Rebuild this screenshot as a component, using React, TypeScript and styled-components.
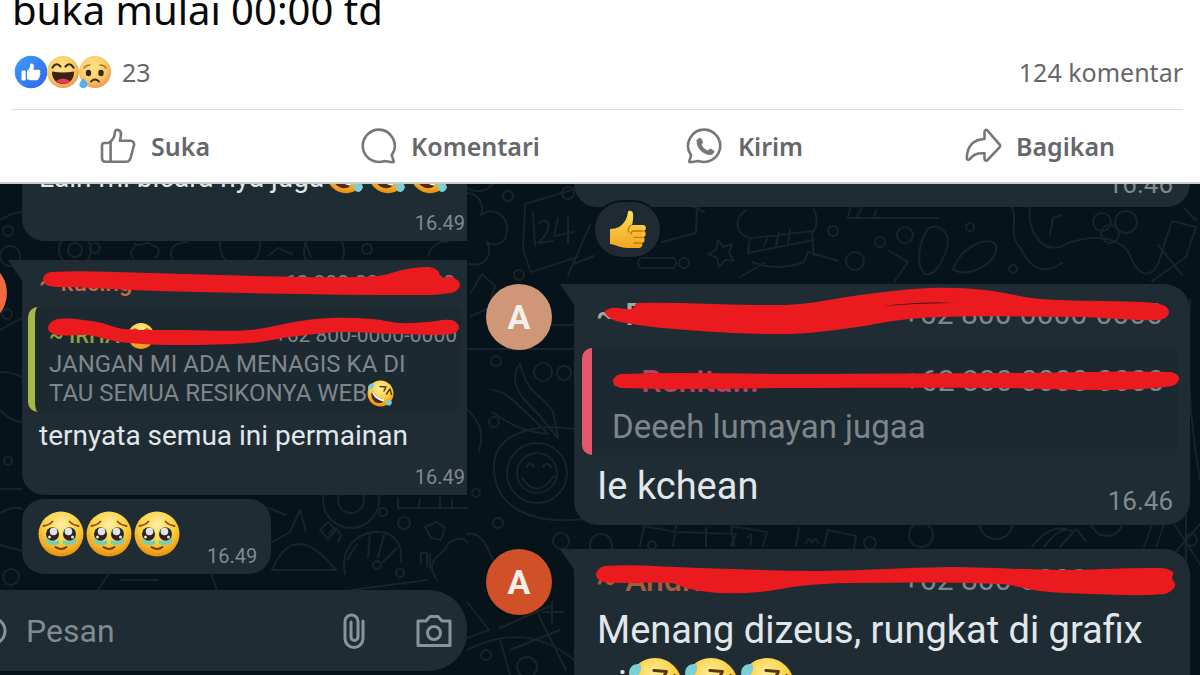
import React from "react";
import styled, { createGlobalStyle } from "styled-components";

const GlobalStyle = createGlobalStyle`
  * { box-sizing: border-box; }
  body { margin: 0; background: #07131a; }
`;

const uiFont = `"Noto Sans", "Open Sans", sans-serif`;
const chatFont = `Roboto, "Noto Sans", sans-serif`;

const Page = styled.main`
  display: flex;
  flex-direction: column;
  height: 100vh;
  overflow: hidden;
`;

/* ---------- Post ---------- */

const Post = styled.section`
  flex: none;
  padding: 0 17px 0 12px;
  background: #fff;
  border-bottom: 2px solid #c9cccd;
  font-family: ${uiFont};
  color: #65676b;
`;

const PostText = styled.p`
  display: flex;
  align-items: flex-end;
  height: 36px;
  margin: 0;
  overflow: hidden;
  font-size: 40px;
  line-height: 52px;
  color: #080809;
`;

const Summary = styled.div`
  display: flex;
  align-items: center;
  justify-content: space-between;
  height: 74px;
  padding: 0 0 2px 2px;
  border-bottom: 1px solid #dcdee1;
  font-size: 25px;
`;

const Reactions = styled.div`
  display: flex;
  align-items: center;
  gap: 10px;
`;

const Faces = styled.span`
  display: flex;
  svg + svg { margin-left: -1px; }
`;

const Actions = styled.div`
  display: grid;
  grid-template-columns: repeat(4, 1fr);
  height: 72px;
  margin: 0 -4px 0 -5px;
`;

const ActionButton = styled.button`
  display: flex;
  align-items: center;
  justify-content: center;
  gap: 14px;
  padding: 0;
  border: 0;
  background: none;
  font: 600 25px ${uiFont};
  color: #65676b;
`;

const LikeFace = () => (
  <svg width="34" height="34" viewBox="0 0 34 34">
    <defs>
      <linearGradient id="like" x1="0" y1="0" x2="1" y2="1">
        <stop offset="0" stopColor="#3fa0f5" />
        <stop offset="1" stopColor="#2f62ee" />
      </linearGradient>
    </defs>
    <circle cx="17" cy="17" r="16.3" fill="url(#like)" />
    <rect x="7.5" y="15.5" width="4.2" height="10" rx="1.2" fill="#fff" />
    <path d="M13 15.8c2-1.500 3-3.400 3.200-6.100.1-1.800 3.500-1.400 3.700 1.400.1 1.300-.3 2.600-.6 3.600h5.200c1.800 0 2.400 1.900 1.300 2.900 1.100.9.9 2.300-.3 2.900.6 1 .2 2.200-.9 2.600.2 1.300-.6 2.100-2 2.100h-4.800c-2.200 0-3.300-.5-4.800-1.300z" fill="#fff" />
  </svg>
);

const FaceGradient = ({ id }: { id: string }) => (
  <defs>
    <radialGradient id={id} cx=".42" cy=".35" r=".7">
      <stop offset="0" stopColor="#ffe58a" />
      <stop offset=".6" stopColor="#fbcb66" />
      <stop offset="1" stopColor="#ee8f4e" />
    </radialGradient>
  </defs>
);

const HahaFace = () => (
  <svg width="32" height="34" viewBox="0 0 32 34">
    <FaceGradient id="haha" />
    <circle cx="16" cy="17" r="16" fill="url(#haha)" />
    <path d="M5.500 12.500q4-6 8-1M26.500 12.500q-4-6-8-1" fill="none" stroke="#3a2a1c" strokeWidth="2.200" strokeLinecap="round" />
    <path d="M5 16.500q11 2 22 0c.5 7-4.500 12.500-11 12.500S4.500 23.500 5 16.500z" fill="#3c1f17" />
    <path d="M9 26q7-5 14 0-6.500 5.500-14 0z" fill="#ee3b57" />
  </svg>
);

const SadFace = () => (
  <svg width="34" height="34" viewBox="0 0 34 34">
    <FaceGradient id="sad" />
    <circle cx="17" cy="17" r="16" fill="url(#sad)" />
    <path d="M6 13q2-3 6-3M28 13q-2-3-6-3" fill="none" stroke="#b27a33" strokeWidth="1.500" strokeLinecap="round" />
    <ellipse cx="10.500" cy="18" rx="2.700" ry="3.200" fill="#2f2622" />
    <ellipse cx="23" cy="18" rx="2.700" ry="3.200" fill="#2f2622" />
    <path d="M13 26.500q4-4 8 0" fill="none" stroke="#3a2a1c" strokeWidth="1.800" strokeLinecap="round" />
    <path d="M5.500 23c2 2.500 4 4.600 4 6.800a4.200 4.200 0 0 1-8.200 0C1.300 27.500 3.500 25.500 5.500 23z" fill="#57aef2" />
  </svg>
);

const Outline = styled.svg.attrs({ width: 38, height: 38, viewBox: "0 0 38 38" })`
  fill: none;
  stroke: #75777b;
  stroke-width: 2.6;
  stroke-linejoin: round;
  stroke-linecap: round;
`;

const LikeIcon = () => (
  <Outline>
    <path d="M3 18.500c0-1.500.8-2.500 2.400-2.500H9c2-.2 6-4.400 6.400-7.500l.7-4.200c.6-2.500 6-2 5.900 3.200 0 2.400-.7 4.500-1.200 6.200h10.400c3.600 0 4.800 3.200 3.300 6l-2.800 11c-.7 2.600-2 4.100-4.700 4.100H6.500C4 34.800 3 33.500 3 31z" />
    <path d="M11.600 15.500v19" />
  </Outline>
);

const CommentIcon = () => (
  <Outline>
    <path d="M19 2.600A16.200 16.200 0 1 0 25.500 34l8 1.200c1.200.1 1.600-.7 1-1.600l-1.800-5.400A16.200 16.200 0 0 0 19 2.600z" />
  </Outline>
);

const SendIcon = () => (
  <Outline>
    <path d="M19 2.600A16.200 16.200 0 1 1 12.500 34l-8 1.200c-1.200.1-1.600-.7-1-1.600l1.600-5.400A16.200 16.200 0 0 1 19 2.600z" />
    <path d="M11.200 13.500c.6-2 3.200-2.900 4-1.400l1.300 3c.3 1-1.500 2.200-1.200 3 1.400 2.800 3.300 4.500 6.200 5.700.9.300 2-2.200 3.200-1.600l3 1.700c.8.700-.2 3.300-3.200 3.600-7.500.2-14.500-7.500-13.300-14z" fill="#75777b" strokeWidth="1" />
  </Outline>
);

const ShareIcon = () => (
  <Outline>
    <path d="M20.500 4.800c.2-1.800 1.700-2.600 3-1.200l12 13.700c.8 1 .8 2 0 3L23.500 33c-1.300 1.400-3 .6-3-1.200v-5.500c-8.500-.6-11.200 1.800-14.800 5.800-1 1-3 .8-2.900-1.100C3.200 19.500 8.800 12.600 20.500 12z" />
  </Outline>
);

/* ---------- Chat ---------- */

const Chat = styled.section`
  position: relative;
  flex: 1;
  display: grid;
  grid-template-columns: 467fr 733fr;
  min-height: 0;
  overflow: hidden;
  background: #07131a;
  font-family: ${chatFont};
`;

const Wallpaper = styled.svg`
  position: absolute;
  inset: 0;
  width: 100%;
  height: 100%;
  fill: none;
  stroke: #18242a;
  stroke-width: 2;
  stroke-linecap: round;
  stroke-linejoin: round;
`;

const Thread = styled.div`
  position: relative;
  display: flex;
  flex-direction: column;
  min-width: 0;
  min-height: 0;
`;

const Row = styled.div<{ $gutter: number; $end?: number; $gap?: number; $grow?: boolean }>`
  flex: ${(p) => (p.$grow ? "1 0 auto" : "none")};
  display: grid;
  grid-template-columns: ${(p) => p.$gutter}px minmax(0, 1fr);
  padding-right: ${(p) => p.$end ?? 0}px;
  margin-top: ${(p) => p.$gap ?? 0}px;
`;

const AvatarSlot = styled.div<{ $inset: number }>`
  display: flex;
  align-items: flex-start;
  justify-content: flex-end;
  padding-right: ${(p) => p.$inset}px;
`;

const Avatar = styled.span<{ $color: string }>`
  flex: none;
  display: grid;
  place-items: center;
  width: 66px;
  height: 66px;
  border-radius: 50%;
  background: ${(p) => p.$color};
  color: #f4efe9;
  font-size: 34px;
  font-weight: 700;
`;

const Bubble = styled.article<{ $radius: string; $tail?: boolean; $pad: string }>`
  position: relative;
  grid-column: 2;
  padding: ${(p) => p.$pad};
  border-radius: ${(p) => p.$radius};
  background: #1f2c33;
  color: #e1e7ea;
  &::before {
    content: "";
    display: ${(p) => (p.$tail ? "block" : "none")};
    position: absolute;
    top: 0;
    left: -14px;
    width: 15px;
    height: 22px;
    background: #1f2c33;
    clip-path: polygon(0 0, 100% 0, 100% 100%);
  }
`;

const Clipped = styled.div<{ $height: number }>`
  display: flex;
  align-items: flex-end;
  height: ${(p) => p.$height}px;
  overflow: hidden;
  white-space: nowrap;
`;

const ClippedTime = styled(Clipped)`
  justify-content: flex-end;
  padding-bottom: 8px;
  overflow: visible;
`;

const Sender = styled.header<{ $color: string; $large?: boolean }>`
  display: flex;
  justify-content: space-between;
  padding: ${(p) => (p.$large ? "0 27px 0 22px" : "0 10px 0 17px")};
  font-size: ${(p) => (p.$large ? 32 : 24)}px;
  line-height: ${(p) => (p.$large ? 40 : 30)}px;
  font-weight: 500;
  color: ${(p) => p.$color};
  white-space: nowrap;
`;

const Phone = styled.span<{ $large?: boolean }>`
  font-size: ${(p) => (p.$large ? 30 : 21)}px;
  font-weight: 400;
  color: #7d888e;
`;

const Quote = styled.blockquote<{ $color: string; $large?: boolean }>`
  margin: ${(p) => (p.$large ? "14px 12px 0 8px" : "9px 4px 0 6px")};
  padding: ${(p) => (p.$large ? "12px 14px 7px 20px" : "14px 4px 4px 14px")};
  border-left: ${(p) => (p.$large ? 10 : 7)}px solid ${(p) => p.$color};
  border-radius: 10px 8px 8px 10px;
  background: #1d2930;
  color: #7d868b;
  font-size: ${(p) => (p.$large ? 33 : 24)}px;
  line-height: ${(p) => (p.$large ? 42 : 29)}px;
`;

const QuoteHead = styled.div<{ $color: string; $large?: boolean }>`
  display: flex;
  align-items: center;
  justify-content: space-between;
  height: ${(p) => (p.$large ? 46 : 29)}px;
  padding-bottom: ${(p) => (p.$large ? 4 : 0)}px;
  font-size: ${(p) => (p.$large ? 32 : 22)}px;
  font-weight: 500;
  color: ${(p) => p.$color};
  white-space: nowrap;
`;

const QuoteName = styled.span`
  display: flex;
  align-items: center;
  gap: 8px;
`;

const QuoteLine = styled.div`
  display: flex;
  align-items: center;
  white-space: nowrap;
`;

const Message = styled.p<{ $large?: boolean; $gap?: number }>`
  display: flex;
  align-items: center;
  align-self: flex-start;
  margin: ${(p) => p.$gap ?? 0}px 0 0;
  padding-left: ${(p) => (p.$large ? 23 : 17)}px;
  font-size: ${(p) => (p.$large ? 38 : 28)}px;
  line-height: ${(p) => (p.$large ? 44 : 34)}px;
  white-space: nowrap;
`;

const CutMessage = styled(Message)`
  align-self: flex-end;
  align-items: flex-end;
  gap: 2px;
  line-height: 32px;
`;

const Time = styled.time<{ $large?: boolean; $gap?: number }>`
  display: block;
  align-self: flex-end;
  margin-top: ${(p) => p.$gap ?? 0}px;
  font-size: ${(p) => (p.$large ? 26 : 20)}px;
  line-height: ${(p) => (p.$large ? 30 : 24)}px;
  text-align: right;
  color: #7f8a90;
`;

const Footer = styled.div`
  display: flex;
  justify-content: space-between;
  height: 52px;
  margin-top: 9px;
  padding-right: 17px;
`;

const EmojiBubble = styled(Bubble)`
  display: flex;
  align-items: flex-start;
  justify-self: start;
  gap: 2px;
  height: 75px;
  ${Time} { margin-left: 25px; }
`;

const ReactionBadge = styled.span`
  position: absolute;
  top: 16px;
  left: 19px;
  z-index: 1;
  display: grid;
  place-items: center;
  width: 69px;
  height: 59px;
  border: 2px solid #07131a;
  border-radius: 30px;
  background: #1f2a32;
`;

const Composer = styled.form`
  flex: none;
  display: flex;
  align-items: center;
  height: 81px;
  margin-top: 16px;
  padding-right: 14px;
  border-radius: 0 38px 38px 0;
  background: #1f2c33;
`;

const ComposerInput = styled.input`
  flex: 1;
  min-width: 0;
  padding: 0 0 0 16px;
  border: 0;
  outline: 0;
  background: none;
  font: 32px ${chatFont};
  color: #e1e7ea;
  &::placeholder { color: #7f8b91; opacity: 1; }
`;

const IconButton = styled.button`
  display: grid;
  place-items: center;
  padding: 0;
  border: 0;
  background: none;
  & + & { margin-left: 46px; }
  svg { fill: none; stroke: #87949a; stroke-width: 3; stroke-linejoin: round; stroke-linecap: round; }
`;

const EmojiButton = styled(IconButton)`
  width: 10px;
  justify-content: end;
  padding-right: 3px;
`;

const Marker = styled.svg`
  position: absolute;
  inset: 0;
  width: 100%;
  height: 100%;
  overflow: visible;
  pointer-events: none;
`;

type Point = [number, number];

/** Closed smooth outline through a list of points. */
function smooth(pts: Point[]): string {
  const n = pts.length;
  const at = (i: number) => pts[(i + n) % n];
  let d = `M${pts[0][0]} ${pts[0][1]}`;
  for (let i = 0; i < n; i++) {
    const [a, b, c, e] = [at(i - 1), at(i), at(i + 1), at(i + 2)];
    const len = Math.hypot(c[0] - b[0], c[1] - b[1]);
    const k1 = len / (Math.hypot(c[0] - a[0], c[1] - a[1]) || 1) / 3;
    const k2 = len / (Math.hypot(e[0] - b[0], e[1] - b[1]) || 1) / 3;
    d += `C${b[0] + (c[0] - a[0]) * k1} ${b[1] + (c[1] - a[1]) * k1} ${c[0] - (e[0] - b[0]) * k2} ${c[1] - (e[1] - b[1]) * k2} ${c[0]} ${c[1]}`;
  }
  return d + "Z";
}

const nameStroke: Point[] = [[21, 19], [29, 12], [128, 13], [278, 17], [355, 16], [385, 9], [407, 7], [416, 11], [419, 17], [430, 17], [438, 25], [429, 33], [378, 35], [278, 34], [138, 31], [50, 27], [28, 26]];
const quoteStroke: Point[] = [[26, 68], [36, 59], [75, 62], [102, 69], [160, 70], [228, 70], [278, 61], [308, 58], [350, 59], [378, 63], [406, 62], [429, 60], [437, 67], [430, 74], [378, 74], [318, 72], [268, 77], [228, 83], [148, 85], [98, 82], [66, 75], [35, 75]];
const bigNameStroke: Point[] = [[31, 29], [38, 24], [58, 25], [63, 19], [180, 21], [226, 20], [286, 11], [356, 4], [411, 6], [466, 15], [566, 18], [589, 21], [595, 28], [589, 35], [566, 36], [506, 33], [346, 34], [276, 44], [216, 50], [126, 47], [46, 38]];
const bigQuoteStroke: Point[] = [[39, 97], [48, 90], [226, 90], [446, 89], [596, 88], [605, 94], [598, 102], [526, 106], [426, 104], [226, 104], [48, 104]];
const lastStroke: Point[] = [[22, 26], [31, 17], [126, 19], [246, 22], [376, 18], [486, 21], [586, 19], [599, 23], [598, 29], [601, 37], [590, 45], [516, 45], [466, 42], [426, 35], [276, 34], [226, 37], [186, 43], [146, 44], [116, 40], [96, 34], [31, 33]];

const Strokes = ({ paths, children }: { paths: Point[][]; children?: React.ReactNode }) => (
  <Marker aria-hidden="true">
    {paths.map((p, i) => <path key={i} d={smooth(p)} fill="#ea1a1f" />)}
    {children}
  </Marker>
);

/* ---------- Emoji ---------- */

const Rofl = ({ size }: { size: number }) => (
  <svg width={size} height={size} viewBox="0 0 54 54">
    <circle cx="27" cy="27" r="26" fill="url(#yellow)" />
    <path d="M26 13l12 1-4 8M39 28l7-10 3 11" fill="none" stroke="#5a3510" strokeWidth="3" strokeLinecap="round" strokeLinejoin="round" />
    <path d="M12 20c2 9 10 17 24 19-4 9-16 9-22 3-6-6-7-15-2-22z" fill="#55260c" />
    <path d="M12 20c2 9 10 17 24 19l-3 4C22 41 13 34 10 24z" fill="#fff" />
    <path d="M2 16c0-7 5-10 11-9 2 6-1 12-7 12-3 0-4-1-4-3zM38 42c5-4 11-2 12 3-2 7-8 8-11 4-2-2-2-5-1-7z" fill="#7ccfd2" />
  </svg>
);

const HoldingTears = () => (
  <svg width="46" height="46" viewBox="0 0 46 46">
    <circle cx="23" cy="23" r="22.500" fill="url(#yellow)" />
    <path d="M5.500 15q6-1 9-4.500M40.500 15q-6-1-9-4.500" fill="none" stroke="#8a5212" strokeWidth="1.800" strokeLinecap="round" />
    <path d="M8 27q6 6 13 2v4q-7 3-13-2zM38 27q-6 6-13 2v4q7 3 13-2z" fill="#67d0c8" />
    <ellipse cx="14.500" cy="23" rx="6.500" ry="6.800" fill="#2b2523" />
    <ellipse cx="31.500" cy="23" rx="6.500" ry="6.800" fill="#2b2523" />
    <circle cx="15.500" cy="20.500" r="3.800" fill="#dfe4e6" />
    <circle cx="30.500" cy="20.500" r="3.800" fill="#dfe4e6" />
    <circle cx="11.500" cy="26" r="1.500" fill="#d8e5ea" />
    <circle cx="34.500" cy="26" r="1.500" fill="#d8e5ea" />
    <path d="M17.500 36q5.500 4 11 0" fill="none" stroke="#6d3a0a" strokeWidth="2" strokeLinecap="round" />
  </svg>
);

const HeartEyes = () => (
  <svg width="26" height="26" viewBox="0 0 26 26">
    <circle cx="13" cy="13" r="13" fill="url(#yellow)" />
    <path d="M3 7l4-2 4 2-1 6-3 2-4-3zM15 7l4-2 4 2v5l-4 3-3-2z" fill="#d8543c" />
  </svg>
);

const ThumbsUp = () => (
  <svg width="38" height="40" viewBox="0 0 38 40">
    <path d="M1 19c7 0 12-3 15-8 2-3 2.500-6 3-9 .5-2 4.500-2 5 1.500.4 4 0 8-1 11.500h11c3.500 0 4 5 1 6 2.500 1 2.300 5.500-.5 6.300 2 1.500 1.300 5.500-1.500 5.700 1.200 2.500-.5 5-3 5H18c-6 0-10-3-17-4z" fill="url(#hand)" />
    <path d="M34 21h-9q-3 0-3 3M33.500 27.300H25M32 33h-7M22.500 15q-4 2-3 7" fill="none" stroke="#c9780f" strokeWidth="1.300" strokeLinecap="round" />
  </svg>
);

/* ---------- Wallpaper doodles ---------- */

const rings: [number, number, number][] = [
  [8, 231, 5], [95, 248, 5], [10, 256, 10], [75, 250, 16], [75, 250, 7], [7, 314, 5], [8, 461, 4], [11, 577, 8], [367, 249, 5],
  [508, 196, 5], [519, 275, 5], [496, 361, 5], [564, 373, 7], [494, 422, 5], [498, 523, 5], [476, 493, 4], [486, 655, 5],
  [537, 473, 30], [537, 473, 20], [404, 523, 6], [377, 565, 4], [400, 573, 4], [383, 512, 4], [351, 500, 13], [351, 500, 28],
  [568, 193, 6], [561, 541, 8], [684, 263, 5], [833, 231, 5], [880, 242, 5], [905, 235, 8], [970, 227, 4], [1013, 269, 4],
  [855, 261, 9], [601, 545, 11], [652, 545, 4], [921, 535, 12], [996, 522, 17], [1107, 520, 16], [1110, 234, 9], [1102, 222, 9],
  [1126, 222, 11], [1191, 540, 6], [527, 667, 10], [543, 372, 9], [240, 246, 20], [324, 251, 20], [870, 543, 6],
];

const lines = [
  "M0 220q14-8 22-8M0 372q12 0 22 5M0 330l22-12M0 410q12 12 22 12M0 489h22M0 513q14-8 22-4M0 545l22 6",
  "M133 258c-6-8 4-10 2-14 8 4 12-6 18 2 6-2 8 8 2 12M172 258c-4-10 4-16 16-16M268 256l10-8 14 6M305 242l6 15M428 256c4-12 14-16 20-14",
  "M467 193c10 0 18 10 14 22 10-8 26-2 26 14s-14 18-20 13c6 10 0 26-18 22M471 292l11-18 13 12-6 22-18 8",
  "M525 206l-2 44 8 22 47-15M525 204l60-18M533 212l2 34M538 224c10-9 17 4 0 19l15-2M558 218l-4 18 20-4M568 216v28",
  "M467 349h107M503 325h80M520 364c-14 20 4 36 18 50l20 24-5-26c-12-20-24-14-33-48zM492 390c16 2 22 12 36 24l20 20M492 412c20 14 30 18 53 22",
  "M467 409c12 12 18 24 12 42M574 429c-40-6-80 4-80 38 0 42 40 58 90 52M527 467q3-7 7 0M543 467q4-7 8 0M522 478q15 22 32-2",
  "M329 533l7-5 5 7-3 7M345 574c-6-30 18-44 34-42 16 0 24 14 22 30M357 544l-10 16M370 533l-2 24M384 535l-6 22M397 548l-14 14",
  "M272 542l18-10 10-22 6 22M286 515l-20-8M328 522l8 8-8 9-8-9zM425 527l12-5 8 6-4 12-10-2zM421 563v-10h6v14M430 554v14",
  "M398 498v10h69M420 500l-2 8M440 498v10M452 500v9M272 570q22-52 64 0zM98 590l10-15M120 580h38M217 590l-6-16M352 590l75-10M437 580c-12-16 0-24 8-30 4-12 18-14 22-8",
  "M467 534c18-3 22 20 26 26M467 602l22 28-22 8M500 640l10 35M500 628l50-22M536 610l30 60M510 650l50-20M543 612h20M552 602v20",
  "M662 242l34-9 1-25M704 212l-10-5M718 240l5 7 9-3-3 9 5 8-9-1-6 7-2-9-9-4 8-4zM640 258h34q4 5 0 10h-34q-4-5 0-10z",
  "M746 210c-14 10-10 26 6 28l62-7c4-8 3-14 0-22M748 253l66-13M750 238l-2 15M812 232l2 24M764 246l4-10M776 246l3-14M788 244l2-14M752 262q26 10 52 0l4-10 30 9M740 277l24-14",
  "M848 218h90M850 208l-2 10M862 208l-6 10M876 210l-2 8M929 228c10-4 22 4 18 20-6 18-14 28-22 26-10-8-6-36 4-46zM953 270c8-24 34-34 42-26 8 12-20 36-42 26z",
  "M888 250l20 12-14 20M1012 207c6 12-4 30 8 40 12 26 26 26 42 16M1030 207c-4 24 14 52 38 36M1050 235l3-17 9-3M1068 243c30-10 50-4 60 8 12 32 28 28 34 0l10-30 24 6-10 30-34 24M1184 208l12 12M1158 245l24 30",
  "M640 546l4-20 32 6 60 2-5 12M676 526l-3 20M706 528v18M734 546l-3-20 36 6-4 14M796 546l3-18M828 530l-4 16M828 530l28 6-2 12M748 537q6-8 2 8M806 543q4-8 6 0 4-8 6 0",
  "M1032 547q16-22 34-18M1044 547q16-22 28-16M1060 547l16-18 10 12M1144 547l8-22M1156 547l8-22M1174 524l26 40M1200 524l-26 30M1186 516v50M1190 300q-6 90 10 180M467 650q60-30 107 10M467 188q14 8 26-4M590 225l-22 50M574 264l20-8",
];

const Doodles = () => (
  <Wallpaper viewBox="0 184 1200 491" preserveAspectRatio="xMinYMin slice" aria-hidden="true">
    <defs>
      <radialGradient id="yellow" cx=".5" cy=".3" r=".72">
        <stop offset="0" stopColor="#fff0a0" />
        <stop offset=".55" stopColor="#fccf3e" />
        <stop offset="1" stopColor="#e8880f" />
      </radialGradient>
      <linearGradient id="hand" x1="0" y1="0" x2="0" y2="1">
        <stop offset="0" stopColor="#ffdf55" />
        <stop offset="1" stopColor="#f2a51d" />
      </linearGradient>
    </defs>
    {rings.map(([cx, cy, r], i) => <circle key={i} cx={cx} cy={cy} r={r} />)}
    {lines.map((d) => <path key={d} d={d} />)}
  </Wallpaper>
);

/* Numbers stay masked under the marker strokes. */
const maskedPhone = "+62 800-0000-0000";

export default function App() {
  return (
    <>
      <GlobalStyle />
      <Page>
        <Post>
          <PostText>buka mulai 00:00 td</PostText>
          <Summary>
            <Reactions>
              <Faces><LikeFace /><HahaFace /><SadFace /></Faces>
              <span>23</span>
            </Reactions>
            <span>124 komentar</span>
          </Summary>
          <Actions>
            <ActionButton type="button"><LikeIcon />Suka</ActionButton>
            <ActionButton type="button"><CommentIcon />Komentari</ActionButton>
            <ActionButton type="button"><SendIcon />Kirim</ActionButton>
            <ActionButton type="button"><ShareIcon />Bagikan</ActionButton>
          </Actions>
        </Post>

        <Chat>
          <Doodles />

          <Thread>
            <Row $gutter={22}>
              <Bubble $radius="0 0 0 22px" $pad="0 2px 6px 0">
                <Clipped $height={10}>
                  <CutMessage>Lain mi bicara nya juga<Rofl size={40} /><Rofl size={40} /><Rofl size={40} /></CutMessage>
                </Clipped>
                <Time $gap={17}>16.49</Time>
              </Bubble>
            </Row>

            <Row $gutter={22} $gap={19}>
              <AvatarSlot $inset={15}><Avatar $color="#f2693f" /></AvatarSlot>
              <Bubble $tail $radius="0 0 0 22px" $pad="8px 2px 6px 0">
                <Sender $color="#c8694a"><span>~ kucing</span><Phone>{maskedPhone}</Phone></Sender>
                <Quote $color="#a5b845">
                  <QuoteHead $color="#8fa03e">
                    <QuoteName>~ IRHA <HeartEyes /></QuoteName>
                    <Phone>{maskedPhone}</Phone>
                  </QuoteHead>
                  <QuoteLine>JANGAN MI ADA MENAGIS KA DI</QuoteLine>
                  <QuoteLine>TAU SEMUA RESIKONYA WEB<Rofl size={27} /></QuoteLine>
                </Quote>
                <Message $gap={7}>ternyata semua ini permainan</Message>
                <Time $gap={12}>16.49</Time>
                <Strokes paths={[nameStroke, quoteStroke]} />
              </Bubble>
            </Row>

            <Row $gutter={22} $gap={4}>
              <EmojiBubble $radius="22px" $pad="12px 14px 6px 16px">
                <HoldingTears /><HoldingTears /><HoldingTears />
                <Time>16.49</Time>
              </EmojiBubble>
            </Row>

            <Composer>
              <EmojiButton type="button" aria-label="Emoji">
                <svg width="30" height="30" viewBox="0 0 30 30"><circle cx="15" cy="15" r="13" /></svg>
              </EmojiButton>
              <ComposerInput aria-label="Pesan" placeholder="Pesan" />
              <IconButton type="button" aria-label="Lampirkan">
                <svg width="28" height="38" viewBox="0 0 28 38">
                  <path d="M22 9v17.500a9 9 0 0 1-18 0V9.500a6.500 6.500 0 0 1 13 0V25a3.300 3.300 0 0 1-7 0V10" />
                </svg>
              </IconButton>
              <IconButton type="button" aria-label="Kamera">
                <svg width="38" height="36" viewBox="0 0 38 36">
                  <path d="M3 8h8l4-4.500h8L27 8h8v24.500H3z" /><circle cx="19" cy="20" r="6.500" />
                </svg>
              </IconButton>
            </Composer>
          </Thread>

          <Thread>
            <Row $gutter={107} $end={10}>
              <Bubble $radius="0 0 24px 24px" $pad="0 17px 0 0">
                <ClippedTime $height={23}><Time $large>16.46</Time></ClippedTime>
                <ReactionBadge><ThumbsUp /></ReactionBadge>
              </Bubble>
            </Row>

            <Row $gutter={107} $end={10} $gap={77}>
              <AvatarSlot $inset={22}><Avatar $color="#cf9678">A</Avatar></AvatarSlot>
              <Bubble $tail $radius="0 26px 24px 24px" $pad="10px 0 9px 0">
                <Sender $large $color="#a9a79c"><span>~ P</span><Phone $large>{maskedPhone}</Phone></Sender>
                <Quote $large $color="#e5566f">
                  <QuoteHead $large $color="#b04664">
                    <QuoteName>~ Renita...</QuoteName>
                    <Phone $large>{maskedPhone}</Phone>
                  </QuoteHead>
                  <QuoteLine>Deeeh lumayan jugaa</QuoteLine>
                </Quote>
                <Footer>
                  <Message $large>Ie kchean</Message>
                  <Time $large>16.46</Time>
                </Footer>
                <Strokes paths={[bigNameStroke, bigQuoteStroke]}>
                  <path d="M308 22q40-5 74-3-34 0-74 3z" fill="#1c1d22" />
                </Strokes>
              </Bubble>
            </Row>

            <Row $gutter={107} $end={10} $gap={24} $grow>
              <AvatarSlot $inset={22}><Avatar $color="#d05027">A</Avatar></AvatarSlot>
              <Bubble $tail $radius="0 26px 0 0" $pad="11px 0 0 0">
                <Sender $large $color="#a85a3c"><span>~ Andri</span><Phone $large>{maskedPhone}</Phone></Sender>
                <Message $large $gap={8}>Menang dizeus, rungkat di grafix</Message>
                <Message $large $gap={5}>
                  ai<Rofl size={56} /><Rofl size={56} /><Rofl size={56} />
                </Message>
                <Strokes paths={[lastStroke]} />
              </Bubble>
            </Row>
          </Thread>
        </Chat>
      </Page>
    </>
  );
}
